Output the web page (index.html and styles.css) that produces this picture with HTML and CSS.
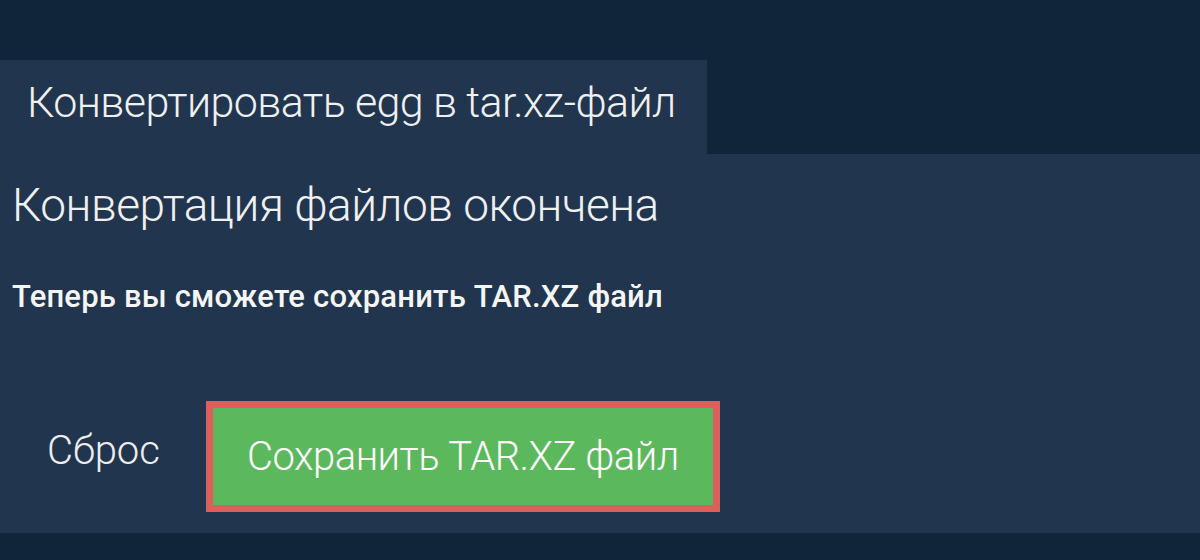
FILE: index.html
```html
<!DOCTYPE html>
<html lang="ru">
<head>
  <meta charset="UTF-8" />
  <title>Конвертировать egg в tar.xz-файл</title>
  <link rel="stylesheet" href="styles.css">
</head>
<body>
  <div class="page">
    <div class="tab">
      <h1>Конвертировать egg в tar.xz-файл</h1>
    </div>
    <div class="panel">
      <h2>Конвертация файлов окончена</h2>
      <p class="note">Теперь вы сможете сохранить TAR.XZ файл</p>
      <div class="actions">
        <a class="reset" href="#">Сброс</a>
        <button class="save">Сохранить TAR.XZ файл</button>
      </div>
    </div>
  </div>
</body>
</html>
```

FILE: styles.css
```css
* {
  margin: 0;
  padding: 0;
  box-sizing: border-box;
}
body {
  background: #10243a;
  color: #fff;
  font-family: Roboto, 'Noto Sans', sans-serif;
  height: 560px;
  overflow: hidden;
}
.page {
  padding-top: 60px;
}
.tab {
  width: 707px;
  height: 94px;
  background: #21364e;
  padding: 17px 0 0 27px;
}
.tab h1 {
  font-weight: 300;
  font-size: 43px;
  letter-spacing: -0.6px;
  color: #f0f0f0;
}
.panel {
  background: #21364e;
  height: 379px;
  padding: 24px 12px 0;
}
.panel h2 {
  font-weight: 300;
  font-size: 46px;
  letter-spacing: -0.5px;
  color: #f0f0f0;
}
.note {
  margin-top: 46px;
  font-weight: 500;
  font-size: 31px;
  letter-spacing: 0.2px;
  color: #f5f5f5;
}
.actions {
  display: flex;
  align-items: center;
  margin-top: 86px;
}
.reset {
  color: #eee;
  text-decoration: none;
  font-weight: 300;
  font-size: 40px;
  margin: 0 46px 12px 35px;
}
.save {
  background: #5cb85c;
  border: 7px solid #dc5f5b;
  color: #fff;
  font-family: Roboto, 'Noto Sans', sans-serif;
  font-weight: 300;
  font-size: 40px;
  letter-spacing: -0.5px;
  width: 514px;
  height: 111px;
}
```
